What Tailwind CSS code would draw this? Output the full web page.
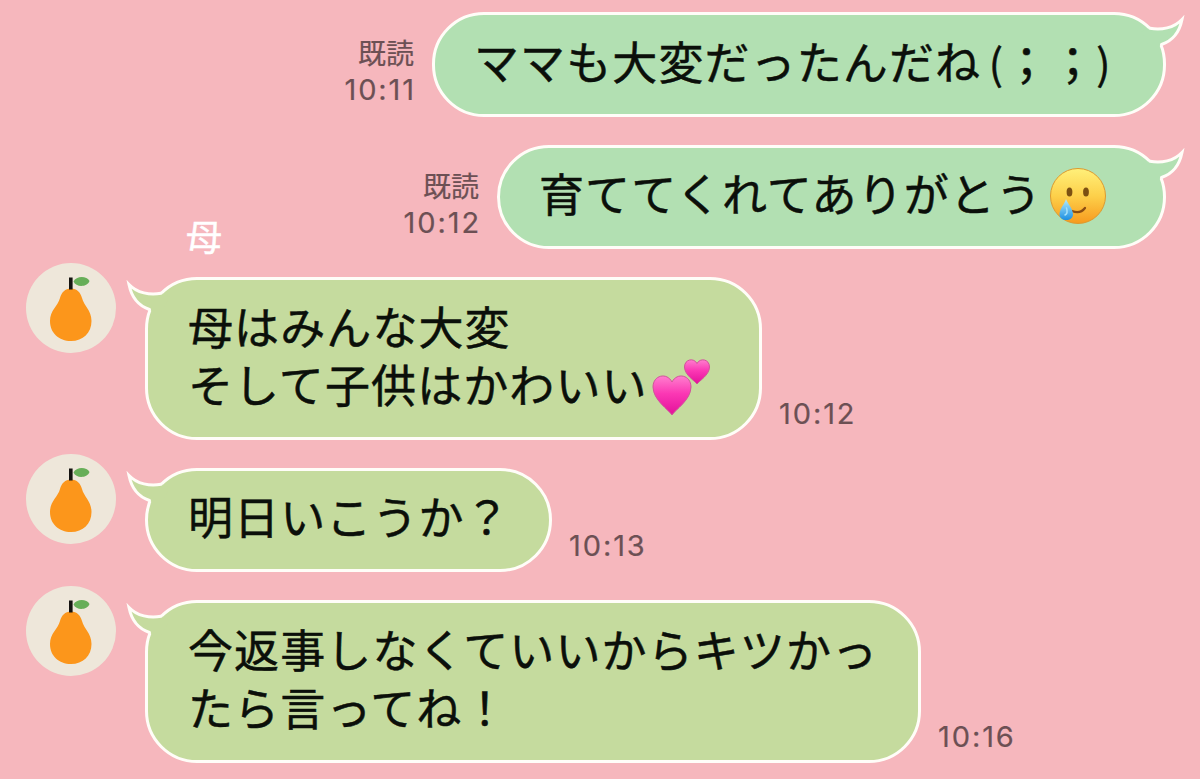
<!DOCTYPE html>
<html lang="ja">

<head>
    <meta charset="UTF-8">
    <meta name="viewport" content="width=device-width, initial-scale=1.0">
    <title>トーク</title>
    <script src="https://cdn.jsdelivr.net/npm/@tailwindcss/browser@4"></script>
</head>

<body class="bg-[#f6b7bd] overflow-hidden font-['Noto_Sans_CJK_JP',sans-serif]">
    <!-- shared shapes -->
    <svg class="hidden">
        <symbol id="tail" viewBox="0 0 46 42">
            <path d="M38 16.5C26 19 13 16 5.500 8C8 20 15 29 26.500 33L34 40L46 20Z" fill="currentColor" />
            <path d="M37 16.300C26 18.500 13 16 5 7.500C7.500 20 15 29 25.500 32.500" fill="none" stroke="#fffdf8" stroke-width="3" stroke-linejoin="miter" stroke-linecap="round" />
        </symbol>
        <symbol id="pear" viewBox="0 0 90 90">
            <circle cx="45" cy="45" r="45" fill="#eee7da" />
            <path d="M45 25.500C51 25.500 54.500 29.500 56 35C58 43 65.500 47 65.500 58C65.500 70 57 78 45 78C33 78 24 70 24 58C24 47 32 43 34 35C35.500 29.500 39 25.500 45 25.500Z" fill="#fc961b" />
            <rect x="43" y="14.500" width="3.600" height="12" fill="#151310" />
            <path d="M47.500 18.500C50 12.500 61 12.500 63.500 18C61 24.500 50 24.500 47.500 18.500Z" fill="#67ae58" />
        </symbol>
    </svg>

    <main class="w-[1200px] h-[779px] pt-3 flex flex-col gap-7 text-[45px] leading-[58px] tracking-[1.1px] text-[#0b0f0a] [-webkit-text-stroke:0.5px]">
        <!-- sent -->
        <div class="flex justify-end gap-[18px] pr-[34px] h-[105px]">
            <div class="pt-[22px] text-right text-[28px] leading-9 tracking-normal text-[#6c5054] [-webkit-text-stroke:0.2px]">
                <p>既読</p>
                <p class="pt-[2px] -mr-[2px] font-['Inter',sans-serif] text-[29px] tracking-[1.9px]">10:11</p>
            </div>
            <div class="relative w-[734px] pl-[39px] pt-[17px] rounded-[52px] border-3 border-[#fffdf8] bg-[#b2e0b2] whitespace-nowrap">
                ママも大変だったんだね<span class="inline-block w-[23px] text-right text-[42px]">(</span>；；<span class="inline-block w-[23px] text-left text-[42px]">)</span>
                <svg class="absolute -top-[3px] -right-[24px] w-[46px] h-[42px] -scale-x-100 text-[#b2e0b2]"><use href="#tail" /></svg>
            </div>
        </div>

        <div class="flex justify-end gap-[18px] pr-[34px] h-[104px]">
            <div class="pt-[22px] text-right text-[28px] leading-9 tracking-normal text-[#6c5054] [-webkit-text-stroke:0.2px]">
                <p>既読</p>
                <p class="pt-[2px] -mr-[2px] font-['Inter',sans-serif] text-[29px] tracking-[1.9px]">10:12</p>
            </div>
            <div class="relative w-[669px] pl-[39px] pt-[16px] rounded-[52px] border-3 border-[#fffdf8] bg-[#b2e0b2] whitespace-nowrap flex">
                育ててくれてありがとう
                <svg class="w-[58px] h-[58px] ml-[7px] mt-[3px]" viewBox="0 0 58 58">
                    <defs>
                        <linearGradient id="face" x1="0" y1="0" x2="0" y2="1">
                            <stop offset="0" stop-color="#fff07a" />
                            <stop offset=".5" stop-color="#fdd04a" />
                            <stop offset="1" stop-color="#f79a1e" />
                        </linearGradient>
                        <linearGradient id="tear" x1="0" y1="0" x2="0" y2="1">
                            <stop offset="0" stop-color="#b5ecfb" />
                            <stop offset="1" stop-color="#1b8fe3" />
                        </linearGradient>
                    </defs>
                    <circle cx="29" cy="29" r="27.500" fill="url(#face)" stroke="#dc9a30" />
                    <ellipse cx="20.500" cy="25" rx="2.900" ry="4.600" fill="#7c5012" />
                    <ellipse cx="37" cy="25" rx="2.900" ry="4.600" fill="#7c5012" />
                    <path d="M23 44C28 46 33 45 36 41" fill="none" stroke="#8a4c12" stroke-width="2.200" stroke-linecap="round" />
                    <path d="M17 32C19 37 24 42 24 47.500C24 51 21 53 17.500 53C13.500 53 10.500 51 10.500 47.500C10.500 42 15.500 37 17 32Z" fill="url(#tear)" />
                    <path d="M17.500 41C18.500 44 18 47 16 48" fill="none" stroke="#a5e0fa" stroke-width="1.500" stroke-linecap="round" />
                </svg>
                <svg class="absolute -top-[3px] -right-[24px] w-[46px] h-[42px] -scale-x-100 text-[#b2e0b2]"><use href="#tail" /></svg>
            </div>
        </div>

        <!-- received -->
        <div class="relative flex pl-[26px] h-[163px]">
            <p class="absolute left-[186px] -top-[67px] text-[36px] leading-[50px] text-white">母</p>
            <svg class="w-[90px] h-[90px] -mt-[14px] mr-[29px]"><use href="#pear" /></svg>
            <div class="relative w-[617px] pl-[40px] pt-[17px] rounded-[52px] border-3 border-[#fffdf8] bg-[#c5db9e] whitespace-nowrap">
                <p>母はみんな大変</p>
                <div class="flex">
                    そして子供はかわいい
                    <svg class="w-[60px] h-[60px] ml-[3px] mt-[2px]" viewBox="0 0 60 60">
                        <defs>
                            <linearGradient id="heart" x1="0" y1="0" x2="0" y2="1">
                                <stop offset="0" stop-color="#ff7fce" />
                                <stop offset=".45" stop-color="#fb38b4" />
                                <stop offset="1" stop-color="#e3109a" />
                            </linearGradient>
                        </defs>
                        <path d="M21 58C18 53 2 43 2 30C2 18 16 15 21 25C26 15 40 18 40 30C40 43 24 53 21 58Z" fill="url(#heart)" stroke="#d0559a" />
                        <path d="M46 27C44 24 33.500 18 33.500 10C33.500 2 43 .5 46 6.500C49 .5 58.500 2 58.500 10C58.500 18 48 24 46 27Z" fill="url(#heart)" stroke="#d0559a" />
                    </svg>
                </div>
                <svg class="absolute -top-[3px] -left-[24px] w-[46px] h-[42px] text-[#c5db9e]"><use href="#tail" /></svg>
            </div>
            <p class="self-end ml-[17px] mb-2 font-['Inter',sans-serif] text-[29px] leading-9 tracking-[1.9px] text-[#6c5054] [-webkit-text-stroke:0.2px]">10:12</p>
        </div>

        <div class="flex pl-[26px] h-[104px]">
            <svg class="w-[90px] h-[90px] -mt-[14px] mr-[29px]"><use href="#pear" /></svg>
            <div class="relative w-[407px] pl-[40px] pt-[16px] rounded-[52px] border-3 border-[#fffdf8] bg-[#c5db9e] whitespace-nowrap">
                明日いこうか？
                <svg class="absolute -top-[3px] -left-[24px] w-[46px] h-[42px] text-[#c5db9e]"><use href="#tail" /></svg>
            </div>
            <p class="self-end ml-[17px] mb-2 font-['Inter',sans-serif] text-[29px] leading-9 tracking-[1.9px] text-[#6c5054] [-webkit-text-stroke:0.2px]">10:13</p>
        </div>

        <div class="flex pl-[26px] h-[163px]">
            <svg class="w-[90px] h-[90px] -mt-[14px] mr-[29px]"><use href="#pear" /></svg>
            <div class="relative w-[776px] pl-[40px] pt-[17px] rounded-[52px] border-3 border-[#fffdf8] bg-[#c5db9e] whitespace-nowrap">
                <p>今返事しなくていいからキツかっ</p>
                <p>たら言ってね！</p>
                <svg class="absolute -top-[3px] -left-[24px] w-[46px] h-[42px] text-[#c5db9e]"><use href="#tail" /></svg>
            </div>
            <p class="self-end ml-[17px] mb-2 font-['Inter',sans-serif] text-[29px] leading-9 tracking-[1.9px] text-[#6c5054] [-webkit-text-stroke:0.2px]">10:16</p>
        </div>
    </main>
</body>

</html>
